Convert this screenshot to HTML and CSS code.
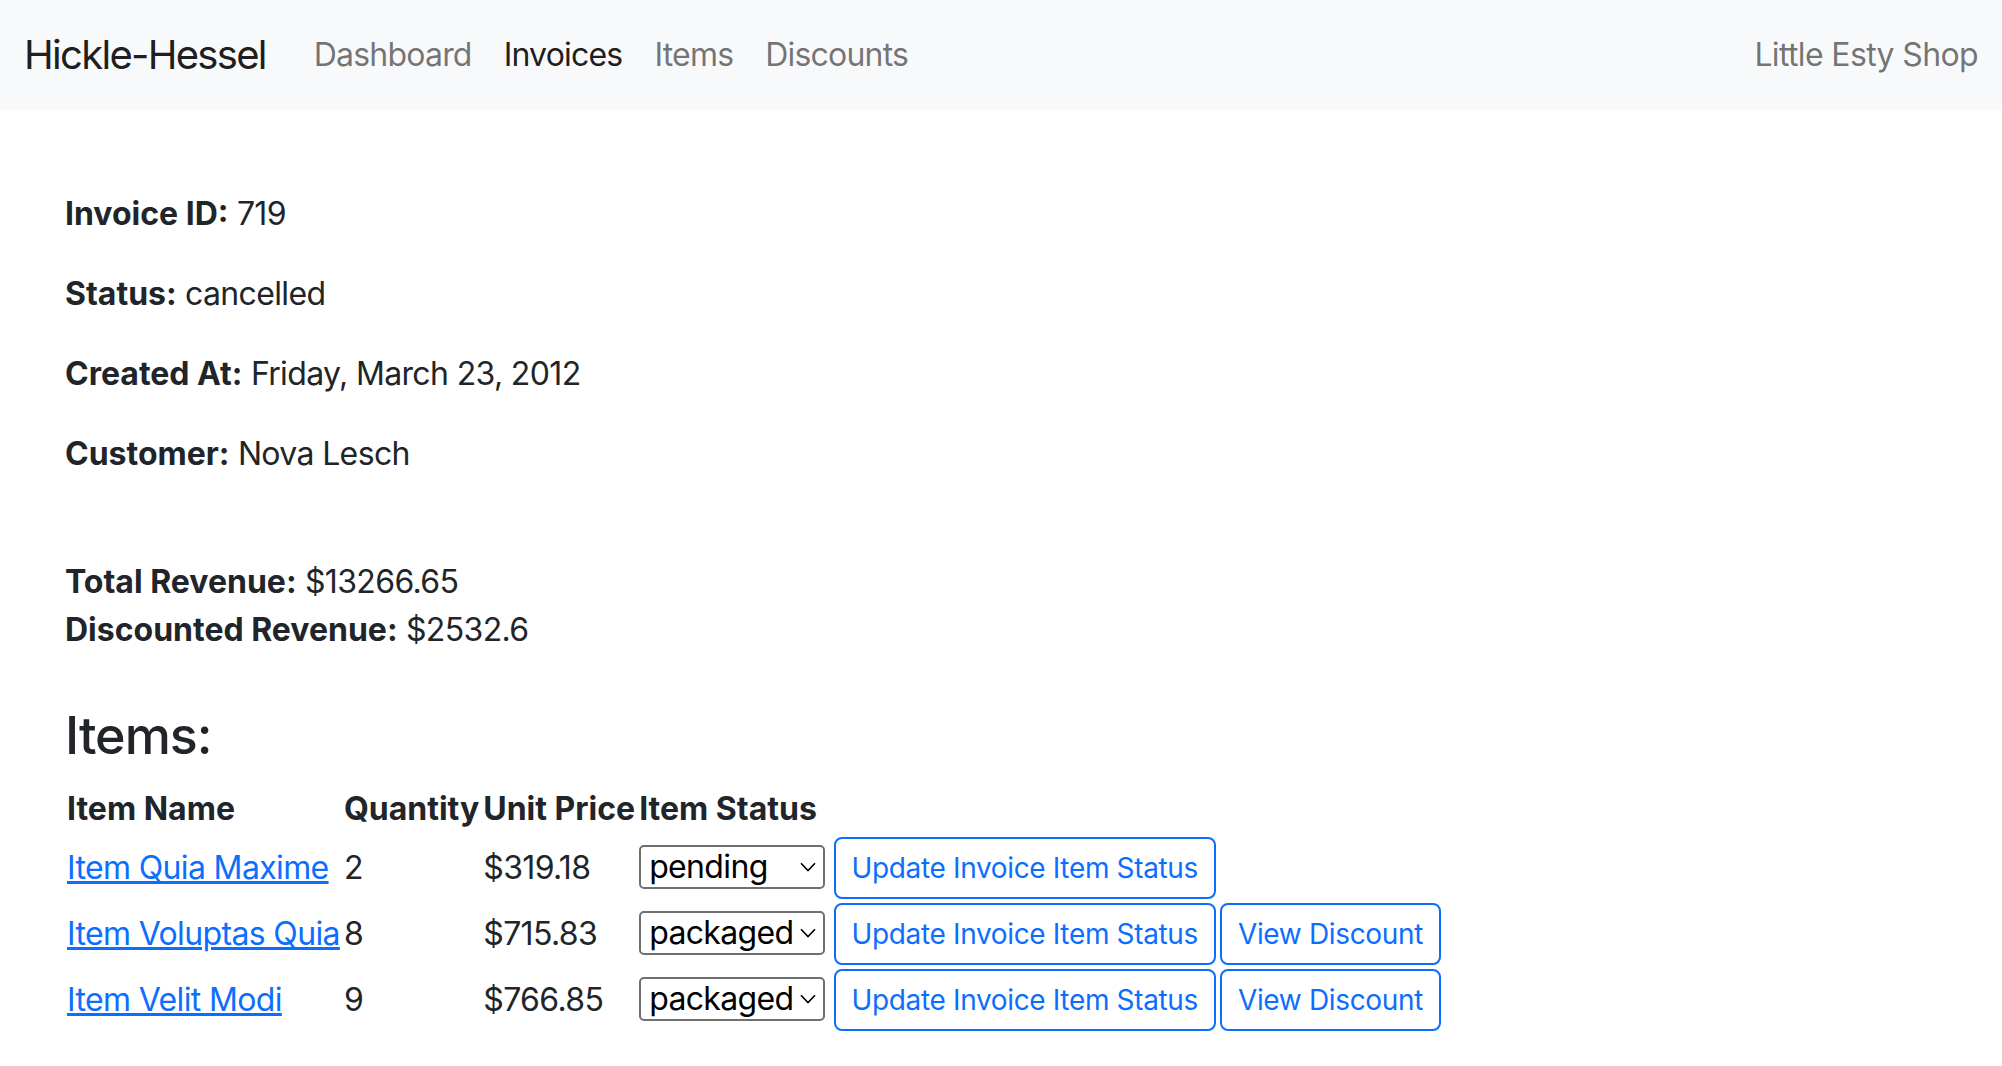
FILE: index.html
```html
<!DOCTYPE html>
<html lang="en">
<head>
<meta charset="utf-8">
<title>Little Esty Shop</title>
<link rel="stylesheet" href="styles.css">
</head>
<body>
<nav class="navbar">
  <a class="brand" href="#">Hickle-Hessel</a>
  <ul class="nav">
    <li><a class="nav-link" href="#">Dashboard</a></li>
    <li><a class="nav-link active" href="#">Invoices</a></li>
    <li><a class="nav-link" href="#">Items</a></li>
    <li><a class="nav-link" href="#">Discounts</a></li>
  </ul>
  <span class="navbar-text">Little Esty Shop</span>
</nav>

<main class="container">
  <section class="invoice-info">
    <p><strong>Invoice ID:</strong> 719</p>
    <p><strong>Status:</strong> cancelled</p>
    <p><strong>Created At:</strong> Friday, March 23, 2012</p>
    <p><strong>Customer:</strong> Nova Lesch</p>
  </section>

  <section class="revenue">
    <p><strong>Total Revenue:</strong> $13266.65<br><strong>Discounted Revenue:</strong> $2532.6</p>
  </section>

  <h2 class="items-title">Items:</h2>
  <table class="items-table">
    <thead>
      <tr>
        <th>Item Name</th>
        <th>Quantity</th>
        <th>Unit Price</th>
        <th>Item Status</th>
      </tr>
    </thead>
    <tbody>
      <tr>
        <td><a class="item-link" href="#">Item Quia Maxime</a></td>
        <td>2</td>
        <td>$319.18</td>
        <td class="status-cell"><select class="status-select"><option>pending</option><option>packaged</option><option>shipped</option></select> <button class="btn">Update Invoice Item Status</button></td>
        <td></td>
      </tr>
      <tr>
        <td><a class="item-link" href="#">Item Voluptas Quia</a></td>
        <td>8</td>
        <td>$715.83</td>
        <td class="status-cell"><select class="status-select"><option>packaged</option><option>pending</option><option>shipped</option></select> <button class="btn">Update Invoice Item Status</button></td>
        <td><a class="btn" href="#">View Discount</a></td>
      </tr>
      <tr>
        <td><a class="item-link" href="#">Item Velit Modi</a></td>
        <td>9</td>
        <td>$766.85</td>
        <td class="status-cell"><select class="status-select"><option>packaged</option><option>pending</option><option>shipped</option></select> <button class="btn">Update Invoice Item Status</button></td>
        <td><a class="btn" href="#">View Discount</a></td>
      </tr>
    </tbody>
  </table>
</main>
</body>
</html>
```

FILE: styles.css
```css
* {
  box-sizing: border-box;
}

html, body {
  margin: 0;
  padding: 0;
}

body {
  font-family: Inter, "Noto Sans", "Liberation Sans", sans-serif;
  font-size: 32px;
  line-height: 48px;
  letter-spacing: -0.64px;
  color: #212529;
  background: #fff;
}

/* Navbar */
.navbar {
  display: flex;
  align-items: center;
  background: #f8f9fa;
  padding: 15px 24px;
}

.brand {
  font-size: 40px;
  line-height: 60px;
  letter-spacing: -1.7px;
  padding: 10px 0;
  margin-right: 32px;
  color: rgba(0, 0, 0, 0.9);
  text-decoration: none;
}

.nav {
  display: flex;
  list-style: none;
  margin: 0;
  padding: 0;
}

.nav-link {
  display: block;
  padding: 16px;
  letter-spacing: -0.8px;
  color: rgba(0, 0, 0, 0.55);
  text-decoration: none;
}

.nav-link.active {
  color: rgba(0, 0, 0, 0.9);
}

.navbar-text {
  margin-left: auto;
  padding: 16px 0;
  color: rgba(0, 0, 0, 0.55);
}

/* Content */
.container {
  max-width: 1920px;
  margin: 80px auto 0;
  padding: 0 24px;
}

.container p {
  margin: 0 0 32px;
}

strong {
  font-weight: 700;
  letter-spacing: 0;
}

.revenue {
  padding-top: 48px;
}

.items-title {
  font-size: 52px;
  line-height: 1.2;
  font-weight: 500;
  letter-spacing: -1px;
  margin: 0 0 16px;
  padding-top: 19px;
}

.items-table {
  border-collapse: collapse;
}

.items-table th,
.items-table td {
  padding: 2px;
  text-align: left;
}

.items-table th {
  font-weight: 700;
  letter-spacing: 0;
}

.item-link {
  color: #0d6efd;
  text-decoration: underline;
}

.status-select {
  appearance: none;
  -webkit-appearance: none;
  font-family: inherit;
  font-size: 32px;
  letter-spacing: -0.64px;
  width: 186px;
  height: 44px;
  margin: 0;
  padding: 0 22px 0 8px;
  border: 2px solid #6f6f6f;
  border-radius: 5px;
  color: #000;
  background: #fff url("data:image/svg+xml,%3Csvg xmlns='http://www.w3.org/2000/svg' viewBox='0 0 16 10'%3E%3Cpath d='M1 1.2L8 8.6L15 1.2' fill='none' stroke='black' stroke-width='1.6'/%3E%3C/svg%3E") no-repeat right 7px center / 16px 10px;
}

.btn {
  display: inline-block;
  font-family: inherit;
  font-size: 28px;
  line-height: 42px;
  letter-spacing: -0.35px;
  padding: 8px 16px;
  margin: 0;
  border: 2px solid #0d6efd;
  border-radius: 8px;
  color: #0d6efd;
  background: transparent;
  text-decoration: none;
  cursor: pointer;
}
```
